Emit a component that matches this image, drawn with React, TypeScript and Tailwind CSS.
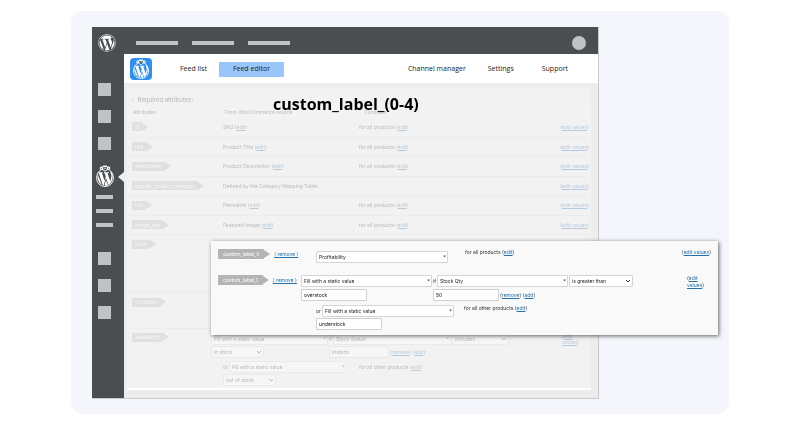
import React from 'react';
import { FaWordpress } from 'react-icons/fa';

interface AttributeRow {
    label: string;
    source: string;
    sourceLink?: boolean;
    condition?: boolean;
}

const ATTRIBUTES: AttributeRow[] = [
    { label: 'id', source: 'SKU', sourceLink: true, condition: true },
    { label: 'title', source: 'Product Title', sourceLink: true, condition: true },
    { label: 'description', source: 'Product Description', sourceLink: true, condition: true },
    { label: 'google_product_category', source: 'Defined by the Category Mapping Table.' },
    { label: 'link', source: 'Permalink', sourceLink: true, condition: true },
    { label: 'image_link', source: 'Featured Image', sourceLink: true, condition: true },
];

// Slanted mark in a ring, with a small head and ears on top.
const PluginMark: React.FC<{ className?: string; detail: string }> = ({ className, detail }) => (
    <svg className={className} viewBox="0 0 34 42" fill="none" aria-hidden="true">
        <path d="M10 9C4 12 1 18 1 25C1 34 8 41 17 41S33 34 33 25C33 18 30 12 24 9" stroke="currentColor" strokeWidth="1.8" />
        <path d="M3 18C2 25 4 34 11 37.5Z" fill="currentColor" />
        <path d="M5 14H12.5V15.5L11.5 16L16 30L18.5 22L16.5 16L15 15.5V14H24V15.5L22 16L27 31L29 23C30 19 28 17 27.5 15C27.5 13 29 12 29.5 13C32 18 32 23 31 27C30 32 27 36 23.5 38L18.8 24.5L14.5 39H13L5.5 16.5L4.5 15.5Z" fill="currentColor" />
        <path d="M19 29L22.5 38.5C20 39.6 18 39.7 16 39.2Z" fill="currentColor" />
        <path d="M7 6C7 3 11 2.5 12.5 3.5L14 1H20L21.5 3.5C23 2.5 27 3 27 6C27 9 24 10 22 9L17 13L12 9C10 10 7 9 7 6Z" fill="currentColor" />
        <path d="M13.5 4H20.5V8L17 11L13.5 8Z" fill={detail} />
        <circle cx="17" cy="6.2" r="1.5" fill="currentColor" />
        <circle cx="10" cy="6.3" r="1" fill={detail} />
        <circle cx="24" cy="6.3" r="1" fill={detail} />
    </svg>
);

const Edit: React.FC<{ text?: string }> = ({ text = 'edit' }) => (
    <span>
        (
        <a href="#edit" className="text-[#2271b1] underline">
            {text}
        </a>
        )
    </span>
);

const Tag: React.FC<{ label: string; wide?: boolean }> = ({ label, wide = false }) => (
    <span className="inline-flex items-center">
        <span
            className={`flex items-center rounded-[1px] bg-[#b4b4b4] text-white ${wide ? 'h-[10px] px-[5px]' : 'h-[9px] px-[3px]'}`}
        >
            {label}
        </span>
        <svg className="h-2 w-[6px] text-[#b4b4b4]" viewBox="0 0 6 8" fill="currentColor" aria-hidden="true">
            <path d="M0 0L6 4L0 8Z" />
        </svg>
    </span>
);

interface SelectProps {
    value: string;
    label: string;
    className: string;
    chevron?: boolean;
}

const Select: React.FC<SelectProps> = ({ value, label, className, chevron = false }) => (
    <span className={`relative inline-flex h-3 shrink-0 ${className}`}>
        <select
            aria-label={label}
            className="h-full w-full appearance-none rounded-[1px] border border-[#d5d5d5] bg-white px-[2px] text-[#222]"
        >
            <option>{value}</option>
        </select>
        {chevron ? (
            <svg className="absolute top-1 right-[3px] h-1 w-1" viewBox="0 0 8 8" fill="none" aria-hidden="true">
                <path d="M0 2L4 6L8 2" stroke="#333" strokeWidth="2" />
            </svg>
        ) : (
            <svg className="absolute top-1 right-[2px] h-[3px] w-[3px]" viewBox="0 0 6 6" aria-hidden="true">
                <path d="M0 1H6L3 5Z" fill="#666" />
            </svg>
        )}
    </span>
);

const TextBox: React.FC<{ value: string; label: string; className: string }> = ({ value, label, className }) => (
    <input
        type="text"
        aria-label={label}
        defaultValue={value}
        className={`h-3 shrink-0 rounded-[1px] border border-[#d0d0d0] bg-white px-[2px] text-[#111] ${className}`}
    />
);

const Sidebar: React.FC = () => (
    <aside className="relative flex w-8 shrink-0 flex-col items-center pt-[29px] pr-[7px]">
        <div className="flex flex-col gap-[14px]">
            <span className="size-[13px] bg-[#bfc3c6]" />
            <span className="size-[13px] bg-[#bfc3c6]" />
            <span className="size-[13px] bg-[#bfc3c6]" />
        </div>
        <PluginMark className="mt-[15px] h-[22px] w-[18px] text-white" detail="#4a4e51" />
        <div className="mt-2 flex flex-col gap-[10px]">
            <span className="h-1 w-[17px] bg-[#bfc3c6]" />
            <span className="h-1 w-[17px] bg-[#bfc3c6]" />
            <span className="h-1 w-[17px] bg-[#bfc3c6]" />
        </div>
        <div className="mt-[25px] flex flex-col gap-[14px]">
            <span className="size-[13px] bg-[#bfc3c6]" />
            <span className="size-[13px] bg-[#bfc3c6]" />
            <span className="size-[13px] bg-[#bfc3c6]" />
        </div>
        <svg className="absolute top-[118px] right-0 h-[10px] w-[6px] text-[#ededed]" viewBox="0 0 6 10" aria-hidden="true">
            <path d="M6 0V10L0 5Z" fill="currentColor" />
        </svg>
    </aside>
);

const Navigation: React.FC = () => (
    <nav className="flex h-[29px] items-center bg-white pt-px pr-[30px] pl-[6px] font-['Open_Sans','Noto_Sans',sans-serif] text-[7px] text-[#222]">
        <span className="flex size-[22px] items-center justify-center rounded-[4px] bg-[#2f8ff0]">
            <PluginMark className="h-5 w-4 text-white" detail="#173a5e" />
        </span>
        <a href="#list" className="ml-7">
            Feed list
        </a>
        <a href="#editor" className="ml-3 flex h-[15px] w-[65px] items-center justify-center bg-[#99c6f8]">
            Feed editor
        </a>
        <div className="ml-auto flex gap-[22px]">
            <a href="#channels">Channel manager</a>
            <a href="#settings">Settings</a>
            <a href="#support" className="ml-[6px]">
                Support
            </a>
        </div>
    </nav>
);

const AttributesTable: React.FC = () => (
    <section className="bg-[#f2f2f2] px-[2px] pb-[2px] text-[5px] leading-[6px]">
        <div className="opacity-30">
            <h2 className="flex h-[19px] items-center gap-1 pt-1 pl-[3px] text-[6px] text-[#222]">
                <span className="text-[5px]">▫</span>
                Required attributes:
            </h2>
            <table className="w-full table-fixed border-collapse text-left text-[#333]">
                <thead>
                    <tr className="h-[10px] bg-white/40">
                        <th className="w-[94px] pl-1 font-normal">Attributes</th>
                        <th className="w-[136px] pl-[2px] font-normal">From WooCommerce source</th>
                        <th className="pl-[5px] font-normal">Condition</th>
                        <th className="w-[29px]" />
                    </tr>
                </thead>
                <tbody>
                    {ATTRIBUTES.map((row) => (
                        <tr key={row.label} className="border-b border-[#ddd] odd:h-5 even:h-[19px]">
                            <td className="whitespace-nowrap pl-[3px]">
                                <Tag label={row.label} />
                            </td>
                            <td className="whitespace-nowrap">
                                {row.source} {row.sourceLink && <Edit />}
                            </td>
                            <td>
                                {row.condition && (
                                    <>
                                        for all products <Edit />
                                    </>
                                )}
                            </td>
                            <td className="whitespace-nowrap">
                                <Edit text="edit values" />
                            </td>
                        </tr>
                    ))}
                    <tr className="h-[58px] border-b border-[#ddd] align-top">
                        <td className="pt-[5px] pl-[3px]">
                            <Tag label="price" />
                        </td>
                        <td colSpan={3} />
                    </tr>
                    <tr className="h-9 border-b border-[#ddd] align-top">
                        <td className="pt-[5px] pl-[3px]">
                            <Tag label="condition" />
                        </td>
                        <td colSpan={3} />
                    </tr>
                    <tr className="align-top">
                        <td className="pt-1 pl-[3px]">
                            <Tag label="availability" />
                        </td>
                        <td colSpan={2}>
                            <div className="-ml-3 flex flex-col pt-1">
                                <div className="flex items-center">
                                    <Select value="Fill with a static value" label="Availability source" className="w-[117px]" />
                                    <span className="w-[5px] text-center">if</span>
                                    <Select value="Stock Status" label="Availability field" className="w-[118px]" />
                                    <Select value="includes" label="Availability rule" className="ml-px w-[57px]" chevron />
                                </div>
                                <div className="mt-px flex items-center">
                                    <Select value="in stock" label="Stock value" className="w-[53px]" chevron />
                                    <TextBox value="instock" label="Status value" className="ml-[65px] w-[60px]" />
                                    <span className="ml-px">
                                        <Edit text="remove" /> <Edit text="add" />
                                    </span>
                                </div>
                                <div className="mt-[3px] ml-3 flex items-center">
                                    <span className="w-[6px]">or</span>
                                    <Select value="Fill with a static value" label="Fallback source" className="w-[118px]" />
                                    <span className="ml-3">
                                        for all other products <Edit />
                                    </span>
                                </div>
                                <div className="mt-px ml-3 flex">
                                    <Select value="out of stock" label="Fallback value" className="w-[53px]" chevron />
                                </div>
                            </div>
                        </td>
                        <td className="pt-1 pr-1 pl-[2px]">
                            <Edit text="edit values" />
                        </td>
                    </tr>
                </tbody>
            </table>
        </div>
    </section>
);

const RemoveLink: React.FC = () => (
    <a href="#remove" className="whitespace-nowrap text-[#2271b1] underline">
        ( remove )
    </a>
);

const CustomLabelPanel: React.FC = () => (
    <div className="absolute top-[230px] right-[11px] left-[140px] bg-[#f9f9f9] px-[7px] pt-2 pb-[5px] text-[5px] leading-[7px] text-[#333] shadow-[1px_1px_4px_rgba(0,0,0,0.6)]">
        <div className="flex items-start">
            <div className="flex w-[98px] items-center gap-1">
                <Tag label="custom_label_0" wide />
                <RemoveLink />
            </div>
            <Select value="Profitability" label="Label 0 source" className="mt-[2px] w-[132px]" />
            <span className="ml-[17px]">
                for all products <Edit />
            </span>
            <span className="ml-auto">
                <Edit text="edit values" />
            </span>
        </div>
        <div className="mt-3 flex items-start">
            <div className="flex w-[83px] items-center gap-1">
                <Tag label="custom_label_1" wide />
                <RemoveLink />
            </div>
            <div>
                <div className="flex items-center">
                    <Select value="Fill with a static value" label="Label 1 source" className="w-[131px]" />
                    <span className="w-[5px] text-center">if</span>
                    <Select value="Stock Qty" label="Label 1 field" className="w-[131px]" />
                    <Select value="is greater than" label="Label 1 rule" className="ml-px w-16" chevron />
                </div>
                <div className="mt-[2px] flex items-center">
                    <TextBox value="overstock" label="Matching value" className="w-[66px]" />
                    <TextBox value="50" label="Quantity" className="ml-[66px] w-[66px]" />
                    <span className="ml-px">
                        <Edit text="remove" /> <Edit text="add" />
                    </span>
                </div>
                <div className="mt-1 ml-[15px] flex items-center">
                    <span className="w-[6px]">or</span>
                    <Select value="Fill with a static value" label="Label 1 fallback source" className="w-[132px]" />
                    <span className="ml-[10px] self-start">
                        for all other products <Edit />
                    </span>
                </div>
                <div className="mt-px ml-[15px] flex">
                    <TextBox value="understock" label="Fallback value" className="w-[66px]" />
                </div>
            </div>
            <span className="ml-auto w-6">
                <Edit text="edit values" />
            </span>
        </div>
    </div>
);

export default function App() {
    return (
        <div className="bg-white px-[71px] py-[11px] font-[Inter,'Liberation_Sans',sans-serif]">
            <main className="relative rounded-xl bg-[#f4f6fb] pt-4 pr-[130px] pb-[15px] pl-[21px]">
                <div className="border-r border-b border-[#c6c9cd] bg-[#4a4e51]">
                    <header className="flex h-[27px] items-center gap-[14px] pt-1 pr-3 pl-[6px]">
                        <FaWordpress className="mr-[6px] size-[18px] text-white" aria-hidden="true" />
                        <span className="h-1 w-[42px] bg-[#bfc3c6]" />
                        <span className="h-1 w-[42px] bg-[#bfc3c6]" />
                        <span className="h-1 w-[42px] bg-[#bfc3c6]" />
                        <span className="ml-auto size-[14px] rounded-full bg-[#bfc3c6]" />
                    </header>
                    <div className="flex">
                        <Sidebar />
                        <div className="min-w-0 flex-1">
                            <Navigation />
                            <div className="bg-[#ededed] pt-[5px] pr-[7px] pb-2 pl-[3px]">
                                <AttributesTable />
                                <div className="h-[2px] bg-white" />
                            </div>
                        </div>
                    </div>
                </div>
                <h1 className="absolute top-[81px] left-[202px] font-['Open_Sans','Noto_Sans',sans-serif] text-base leading-6 font-bold text-black">
                    custom_label_(0-4)
                </h1>
                <CustomLabelPanel />
            </main>
        </div>
    );
}
